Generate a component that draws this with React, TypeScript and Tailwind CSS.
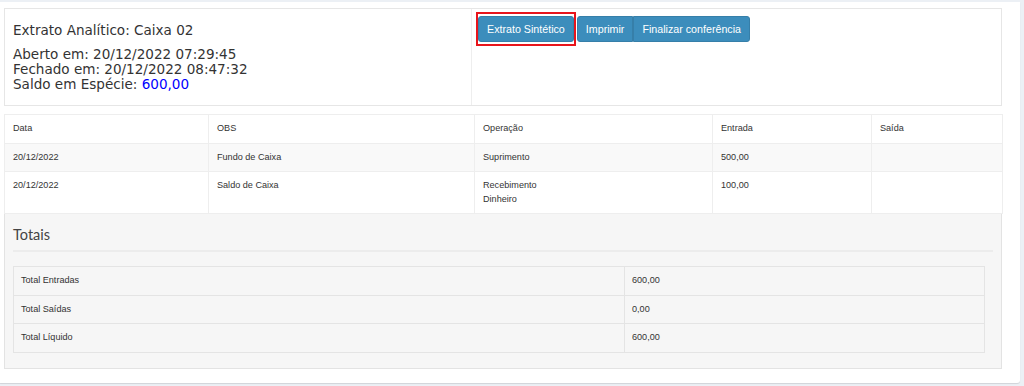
import React from 'react';

interface Movimento {
    data: string;
    obs: string;
    operacao: string[];
    entrada: string;
    saida: string;
}

const movimentos: Movimento[] = [
    { data: '20/12/2022', obs: 'Fundo de Caixa', operacao: ['Suprimento'], entrada: '500,00', saida: '' },
    { data: '20/12/2022', obs: 'Saldo de Caixa', operacao: ['Recebimento', 'Dinheiro'], entrada: '100,00', saida: '' }
];

const totais = [
    { label: 'Total Entradas', valor: '600,00' },
    { label: 'Total Saídas', valor: '0,00' },
    { label: 'Total Líquido', valor: '600,00' }
];

const cell = 'border border-[#eeeeee] px-2 py-[7px] text-left align-top font-normal';
const btn = 'h-[26px] px-2 bg-[#3c8dbc] border border-[#367fa9] text-white text-[10.7px]';

const App: React.FC = () => {
    return (
        <div className="min-h-screen bg-[#ecf0f5] pt-[2px]" style={{ fontFamily: '"Liberation Sans", Arial, sans-serif' }}>
            <div className="w-[1020px] h-[381px] bg-white rounded-br-[3px] shadow-[0_1px_1px_rgba(0,0,0,0.12)] pt-[6px] pl-[4px]">
                <div className="w-[998px]">
                    {/* Header box */}
                    <div className="flex h-[98px] border border-[#e6e6e6]">
                        <div className="w-[467px] border-r border-[#eeeeee] pl-2 pt-[14px] text-[#333] font-['DejaVu_Sans',sans-serif] text-[13.55px] leading-[15px]">
                            <div>Extrato Analítico: Caixa 02</div>
                            <div className="mt-[9px]">
                                <div>Aberto em: 20/12/2022 07:29:45</div>
                                <div>Fechado em: 20/12/2022 08:47:32</div>
                                <div>
                                    Saldo em Espécie: <span className="text-[#0000ff]">600,00</span>
                                </div>
                            </div>
                        </div>
                        <div className="flex-1 pl-[4px] pt-[3px]">
                            <div className="flex items-center">
                                <span className="border-2 border-[#e8141b] py-[2px]">
                                    <button className={`${btn} rounded-[3px] block`}>Extrato Sintético</button>
                                </span>
                                <button className={`${btn} ml-px rounded-l-[3px]`}>Imprimir</button>
                                <button className={`${btn} rounded-r-[3px]`}>Finalizar conferência</button>
                            </div>
                        </div>
                    </div>

                    {/* Movimentos */}
                    <table className="mt-2 w-[998px] table-fixed border-collapse text-[9.1px] leading-[13.5px] text-[#333]">
                        <thead>
                            <tr className="bg-white">
                                <th className={`${cell} w-[204px]`}>Data</th>
                                <th className={`${cell} w-[266px]`}>OBS</th>
                                <th className={`${cell} w-[238px]`}>Operação</th>
                                <th className={`${cell} w-[159px]`}>Entrada</th>
                                <th className={`${cell} w-[131px]`}>Saída</th>
                            </tr>
                        </thead>
                        <tbody>
                            {movimentos.map((m, i) => (
                                <tr key={i} className={i % 2 === 0 ? 'bg-[#f9f9f9]' : 'bg-white'}>
                                    <td className={cell}>{m.data}</td>
                                    <td className={cell}>{m.obs}</td>
                                    <td className={cell}>
                                        {m.operacao.map((o) => (
                                            <div key={o}>{o}</div>
                                        ))}
                                    </td>
                                    <td className={cell}>{m.entrada}</td>
                                    <td className={cell}>{m.saida}</td>
                                </tr>
                            ))}
                        </tbody>
                    </table>

                    {/* Totais */}
                    <div className="h-[155px] border border-t-0 border-[#e3e3e3] bg-[#f6f6f6] px-2 pt-[10px]">
                        <div className="font-['Lato',sans-serif] text-[14.5px] leading-[22px] text-[#444]">Totais</div>
                        <div className="mt-[4px] border-t-2 border-[#ececec]" />
                        <table className="mt-[14px] w-[972px] border-collapse text-[9.1px] leading-[13.5px] text-[#333]">
                            <tbody>
                                {totais.map((t) => (
                                    <tr key={t.label}>
                                        <td className="border border-[#e4e4e4] w-[611px] px-[7px] py-[7px]">{t.label}</td>
                                        <td className="border border-[#e4e4e4] px-[7px] py-[7px]">{t.valor}</td>
                                    </tr>
                                ))}
                            </tbody>
                        </table>
                    </div>
                </div>
            </div>
        </div>
    );
};

export default App;
